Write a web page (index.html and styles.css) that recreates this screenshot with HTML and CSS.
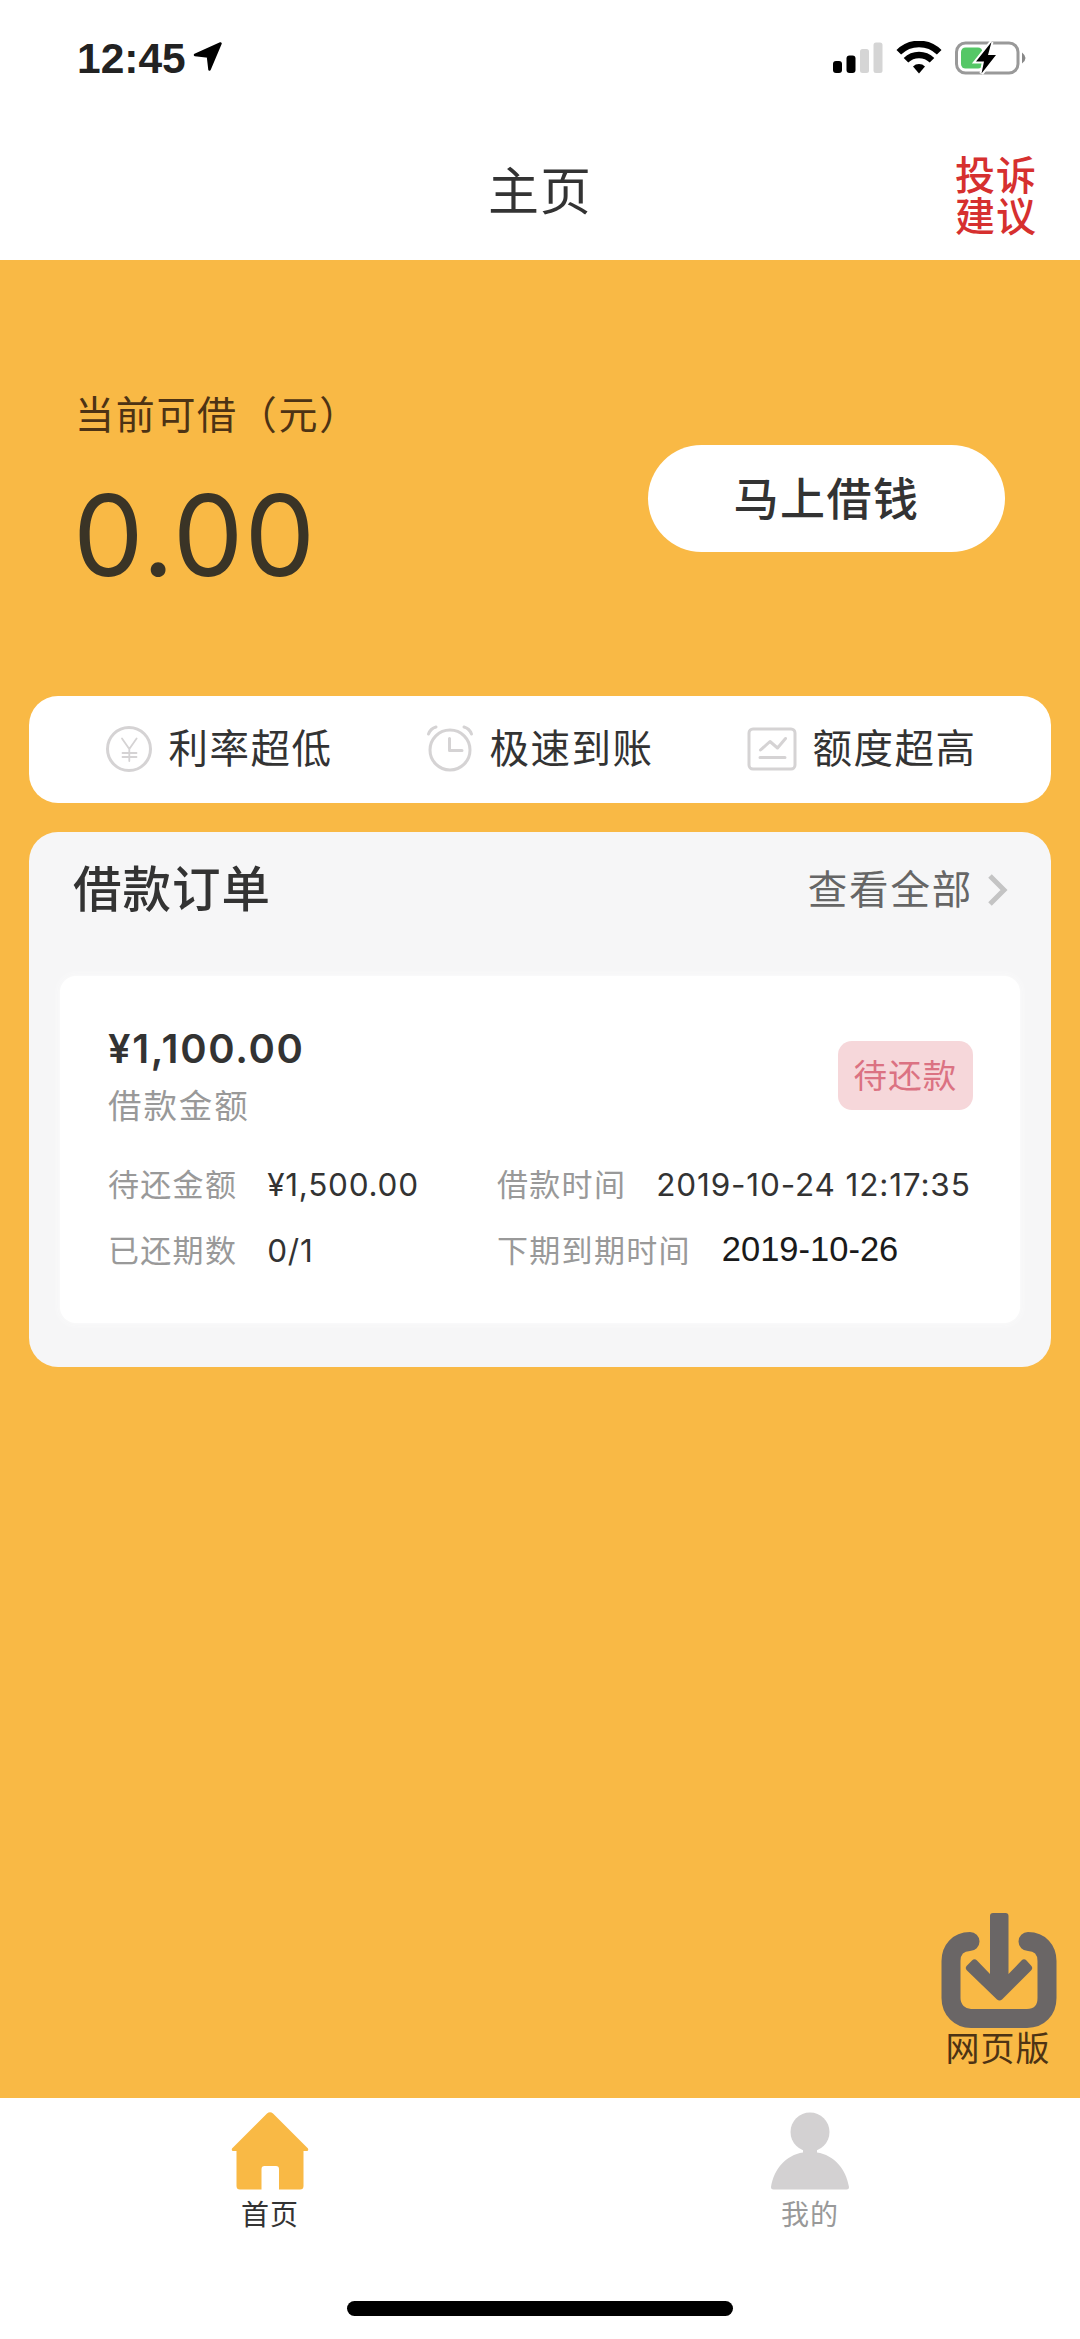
FILE: index.html
```html
<!DOCTYPE html>
<html lang="zh-CN">
<head>
<meta charset="utf-8">
<title>主页</title>
<link rel="stylesheet" href="styles.css">
</head>
<body>
<div class="screen">
  <header class="top">
    <div class="status">
      <span class="clock">12:45</span>
      <svg class="location" viewBox="0 0 30 30"><path d="M27.500 1.500 16.500 27.500 15 14.500 2 13Z"/></svg>
      <svg class="signals" viewBox="0 0 194 34">
        <rect x="1" y="20" width="9" height="12" rx="3"/>
        <rect x="14.500" y="14.500" width="9" height="17.500" rx="3"/>
        <rect class="dim" x="28" y="8" width="9" height="24" rx="2.500"/>
        <rect class="dim" x="41.500" y="1.500" width="9" height="30.500" rx="2.500"/>
        <g class="waves">
          <path d="M66.800 11.300a28.500 28.500 0 0 1 40.400 0"/>
          <path d="M74 19.300a18.500 18.500 0 0 1 26 0"/>
        </g>
        <path d="M81 25.600a8.500 8.500 0 0 1 12 0L87 32.500Z"/>
        <rect class="case" x="124.500" y="2" width="61.500" height="30" rx="9"/>
        <path class="tip" d="M190 11.500q7 5.500 0 11Z"/>
        <rect class="charge" x="129" y="6.500" width="21.500" height="21" rx="4.500"/>
        <path class="bolt" d="M159.500 1 144 20.500h8l-2.500 12L164 14h-8Z"/>
      </svg>
    </div>
    <nav class="titlebar">
      <h1 class="title">主页</h1>
      <a class="feedback">投诉<br>建议</a>
    </nav>
  </header>

  <main class="main">
    <section class="quota">
      <div class="quota-info">
        <p class="quota-label">当前可借（元）</p>
        <p class="quota-value">0.00</p>
      </div>
      <button class="borrow">马上借钱</button>
    </section>

    <section class="features">
      <div class="feature">
        <svg class="feature-icon" viewBox="0 0 48 48"><circle cx="24" cy="24" r="21.500"/><path class="thin" d="m17 13.500 7.300 10.500 7.300-10.500M24.300 24v12M17.500 28h14M17.500 32h14"/></svg>
        <span>利率超低</span>
      </div>
      <div class="feature">
        <svg class="feature-icon" viewBox="0 0 48 48"><circle cx="24" cy="25" r="20"/><path d="M23.500 13.500V25.500H36M2.500 9q2-5.500 7.500-7M45.500 9q-2-5.500-7.500-7"/></svg>
        <span>极速到账</span>
      </div>
      <div class="feature feature-limit">
        <svg class="feature-icon wide" viewBox="0 0 50 48"><rect x="2" y="4" width="46" height="40" rx="4"/><path d="m13.500 25 9.500-8.500 7.500 6.500 8-9.500M13 32.500h25"/></svg>
        <span>额度超高</span>
      </div>
    </section>

    <section class="orders">
      <div class="orders-head">
        <h2 class="orders-title">借款订单</h2>
        <a class="view-all"><span>查看全部</span>
          <svg class="chevron" viewBox="0 0 22 34"><path d="m3 3 14 14L3 31"/></svg>
        </a>
      </div>
      <article class="order">
        <div class="order-top">
          <div>
            <p class="amount">¥1,100.00</p>
            <p class="amount-label">借款金额</p>
          </div>
          <span class="badge">待还款</span>
        </div>
        <dl class="details">
          <div class="detail"><dt>待还金额</dt><dd class="money">¥1,500.00</dd></div>
          <div class="detail"><dt>借款时间</dt><dd class="stamp">2019-10-24 12:17:35</dd></div>
          <div class="detail"><dt>已还期数</dt><dd class="money">0/1</dd></div>
          <div class="detail"><dt>下期到期时间</dt><dd class="due">2019-10-26</dd></div>
        </dl>
      </article>
    </section>

    <a class="web-version">
      <svg class="download" viewBox="0 0 116 116">
        <path class="tray" d="M29 28.500C17 28.500 10 37 10 48v37c0 12 9 20.500 20 20.500h56c12 0 20-8.500 20-20.500V48c0-11-7-19.500-19-19.500"/>
        <path class="arrow" d="M49 3q0-3 3-3h12.500q3 0 3 3v58l13-13.500q2.500-2.500 5 0l4.500 5q2.500 2.500 0 5L61 86.500q-2.500 2-5 0L26 57.500q-2.500-2.500 0-5l5-5q2.500-2.500 5 0L49 61Z"/>
      </svg>
      <span>网页版</span>
    </a>
  </main>

  <footer class="tabs">
    <div class="tab-row">
      <a class="tab active">
        <svg class="tab-icon" viewBox="0 0 78 78"><path d="M36 1.500q3-2.500 6 0L77 36.500q1 3-2 2.500h-2.500v35q0 3.500-3.500 3.500H48V57q0-3-3-3H33.500q-3 0-3 3v20.500H9q-3.500 0-3.500-3.500V39H3q-3 .5-2-2.500Z"/></svg>
        <span>首页</span>
      </a>
      <a class="tab">
        <svg class="tab-icon" viewBox="0 0 78 78"><circle cx="39" cy="20" r="19.500"/><path d="M0 75C3 57 15 43 32 40.500V36h14v4.500C63 43 75 57 78 75q0 2.500-2.500 2.500h-73Q0 77.500 0 75Z"/></svg>
        <span>我的</span>
      </a>
    </div>
    <div class="home-bar"></div>
  </footer>
</div>
</body>
</html>
```
FILE: styles.css
```css
* { box-sizing: border-box; margin: 0; padding: 0; }

body {
  width: 1080px;
  height: 2339px;
  background: #fff;
  color: #333;
  font-family: Inter, "Noto Sans CJK SC", sans-serif;
  font-weight: 400;
}

svg { display: block; flex: none; }

.screen { display: flex; flex-direction: column; height: 2339px; }

.top { height: 260px; }

.status {
  display: flex;
  align-items: flex-start;
  height: 118px;
  padding: 41px 54px 0 77px;
}
.clock {
  color: #222;
  font: 700 42.500px/35px "Liberation Sans", sans-serif;
  width: 116px;
  white-space: nowrap;
}
.location {
  width: 30px;
  height: 30px;
  margin-top: 1px;
  fill: #000;
  stroke: #000;
  stroke-width: 2.5;
  stroke-linejoin: round;
}
.signals { width: 194px; height: 34px; margin-left: auto; }
.signals .dim { fill: #d5d5d5; }
.waves { fill: none; stroke: #000; stroke-width: 6.500; }
.case { fill: none; stroke: #999; stroke-width: 3; }
.tip { fill: #888; }
.charge { fill: #55c766; }
.bolt { fill: #000; stroke: #fff; stroke-width: 4; paint-order: stroke; }

.titlebar {
  display: grid;
  grid-template-columns: 1fr auto 1fr;
  align-items: center;
  height: 142px;
  padding: 8px 43px 0 43px;
}
.title {
  grid-column: 2;
  font-size: 51px;
  line-height: 60px;
  font-weight: 400;
  letter-spacing: 1px;
  margin-bottom: 2px;
}
.feedback {
  justify-self: end;
  color: #d6302f;
  font-size: 40px;
  line-height: 41px;
  font-weight: 500;
  letter-spacing: 1px;
  margin-top: 6px;
}

.main {
  display: flex;
  flex-direction: column;
  height: 1838px;
  padding: 0 29px;
  background: #f9b945;
}

.quota {
  display: flex;
  justify-content: space-between;
  height: 436px;
  padding: 131px 46px 0 46px;
}
.quota-label {
  color: #4d3314;
  font-size: 39px;
  line-height: 48px;
  letter-spacing: 1.700px;
}
.quota-value {
  color: #3a3426;
  font-size: 112px;
  line-height: 136px;
  letter-spacing: 1.200px;
  margin: 28px 0 0 -2px;
}
.borrow {
  width: 357px;
  height: 107px;
  margin-top: 54px;
  padding-bottom: 4px;
  border: 0;
  border-radius: 54px;
  background: #fff;
  color: #333;
  font-family: inherit;
  font-size: 45px;
  font-weight: 500;
  letter-spacing: 1.500px;
}

.features {
  display: grid;
  grid-template-columns: 321px 321px 1fr;
  height: 107px;
  padding: 0 0 1px 76px;
  border-radius: 29px;
  background: #fff;
}
.feature {
  display: flex;
  align-items: center;
  gap: 15.500px;
  color: #333;
  font-size: 39.500px;
  line-height: 48px;
  letter-spacing: 1.500px;
  white-space: nowrap;
}
.feature-icon {
  width: 48px;
  height: 48px;
  fill: none;
  stroke: #d5d3d4;
  stroke-width: 3;
  stroke-linecap: round;
  stroke-linejoin: round;
}
.feature-icon.wide { width: 50px; }
.feature-icon .thin { stroke-width: 1.800; }

.orders {
  height: 535px;
  margin-top: 29px;
  padding: 0 31px;
  border-radius: 29px;
  background: #f6f6f7;
}
.orders-head {
  display: flex;
  justify-content: space-between;
  align-items: center;
  height: 144px;
  padding: 0 11px 28px 13px;
}
.orders-title { font-size: 48.500px; line-height: 58px; font-weight: 500; letter-spacing: 1px; }
.view-all {
  display: flex;
  align-items: center;
  gap: 14px;
  color: #666;
  font-size: 39.500px;
  line-height: 48px;
  letter-spacing: 1.800px;
}
.chevron { width: 22px; height: 34px; fill: none; stroke: #c4c4c4; stroke-width: 5; }

.order {
  height: 347px;
  padding: 50px 47px 0 48px;
  border-radius: 16px;
  background: #fff;
  box-shadow: 0 0 8px #fcfcfc;
}
.order-top { display: flex; justify-content: space-between; height: 138px; }
.amount { font-size: 40px; line-height: 46px; font-weight: 600; letter-spacing: 1.650px; }
.amount-label { color: #999; font-size: 33.500px; line-height: 40px; letter-spacing: 1.900px; margin-top: 14px; }
.badge {
  width: 135px;
  height: 69px;
  margin-top: 15px;
  border-radius: 14px;
  background: #f6d7da;
  color: #db7282;
  font-size: 33.500px;
  line-height: 70px;
  text-align: center;
  letter-spacing: 1.200px;
}
.details { display: grid; grid-template-columns: 389px 1fr; grid-auto-rows: 66px; }
.detail { display: flex; line-height: 41px; white-space: nowrap; }
.detail dt { color: #999; font-size: 31px; letter-spacing: 1.300px; margin-right: 30px; }
.detail dd { font-size: 31.500px; letter-spacing: .75px; }
.detail .stamp { letter-spacing: .85px; }
.detail .due { margin-left: 1px; color: #1a1a1a; font: 34.500px/38px "Liberation Sans", sans-serif; letter-spacing: 0; }

.web-version {
  align-self: flex-end;
  display: flex;
  flex-direction: column;
  align-items: center;
  margin: auto -6px 30px 0;
  color: #4d3314;
  font-size: 34px;
  line-height: 39px;
  letter-spacing: 1px;
}
.web-version span { margin-right: 2px; }
.download { width: 116px; height: 116px; fill: #6a6666; }
.download .tray { fill: none; stroke: #6a6666; stroke-width: 19; stroke-linecap: round; }

.tabs { flex: 1; display: flex; flex-direction: column; align-items: center; background: #fff; }
.tab-row { display: flex; width: 100%; padding-top: 14px; }
.tab {
  flex: 1;
  display: flex;
  flex-direction: column;
  align-items: center;
  gap: 8px;
  color: #999;
  font-size: 28px;
  line-height: 34px;
  letter-spacing: 1px;
}
.tab.active { color: #333; }
.tab-icon { width: 78px; height: 78px; fill: #d3d1d2; }
.active .tab-icon { fill: #f9b945; }
.home-bar { width: 386px; height: 15px; margin: auto 0 23px; border-radius: 8px; background: #000; }
```
